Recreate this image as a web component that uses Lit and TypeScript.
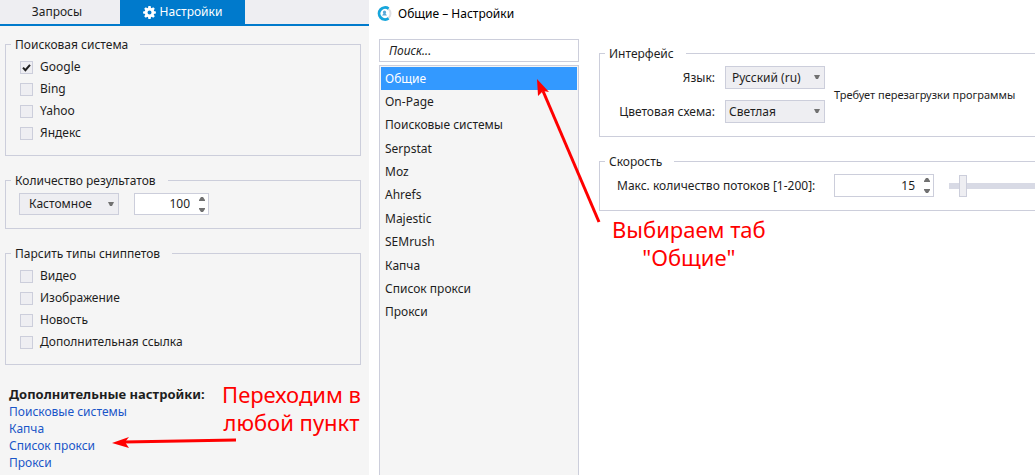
import { LitElement, html, css, svg } from "lit";
import { customElement, property, state } from "lit/decorators.js";
import { classMap } from "lit/directives/class-map.js";

const controls = css`
  * { box-sizing: border-box; }
  fieldset {
    margin: 0;
    padding: 0;
    border: 1px solid #cccedb;
    min-width: 0;
  }
  legend {
    margin-left: 5px;
    padding: 0 12px 0 4px;
    line-height: 17px;
  }
  button, input, select {
    font: inherit;
    color: inherit;
    margin: 0;
  }
`;

@customElement("check-row")
class CheckRow extends LitElement {
  @property() label = "";
  @property({ type: Boolean }) checked = false;

  static styles = css`
    :host { display: block; }
    label { display: flex; align-items: center; gap: 7px; height: 22px; }
    .box { position: relative; display: flex; width: 13px; height: 13px; }
    input {
      appearance: none;
      box-sizing: border-box;
      width: 13px;
      height: 13px;
      margin: 0;
      border: 1px solid #cccedb;
      background: #eeeef2;
    }
    svg { position: absolute; inset: 0; pointer-events: none; display: none; }
    input:checked + svg { display: block; }
  `;

  render() {
    return html`<label>
      <span class="box">
        <input type="checkbox" .checked=${this.checked} />
        <svg width="13" height="13" viewBox="0 0 13 13">
          <path d="M3 6.6 5.4 9.2 10 3.8" fill="none" stroke="#1e1e1e" stroke-width="2" />
        </svg>
      </span>
      <span>${this.label}</span>
    </label>`;
  }
}

@customElement("drop-down")
class DropDown extends LitElement {
  @property() label = "";
  @property({ type: Array }) options: string[] = [];

  static styles = [controls, css`
    :host { display: block; position: relative; width: 100px; }
    select {
      appearance: none;
      display: block;
      width: 100%;
      height: var(--control-height, 23px);
      padding: 0 14px 0 var(--select-indent, 6px);
      border: 1px solid #cccedb;
      border-radius: 0;
      background: #eeeef2;
    }
    .arrow { position: absolute; right: 5px; top: 9px; pointer-events: none; }
  `];

  render() {
    return html`<select aria-label=${this.label}>
        ${this.options.map((o) => html`<option>${o}</option>`)}
      </select>
      <svg class="arrow" width="6" height="4" viewBox="0 0 6 4"><path d="M0 0H6L4 4H2Z" fill="#717171" /></svg>`;
  }
}

@customElement("number-box")
class NumberBox extends LitElement {
  @property() label = "";
  @property({ type: Number }) value = 0;

  static styles = [controls, css`
    :host { display: block; }
    .frame {
      display: flex;
      height: var(--control-height, 23px);
      border: 1px solid #cccedb;
      background: #fff;
    }
    input {
      appearance: textfield;
      flex: 1;
      min-width: 0;
      padding: 0;
      border: 0;
      background: none;
      text-align: right;
    }
    input::-webkit-inner-spin-button { appearance: none; }
    .steps { display: flex; flex-direction: column; justify-content: center; gap: 7px; padding: 0 3px 0 9px; }
    button { display: flex; padding: 0; border: 0; background: none; }
  `];

  render() {
    return html`<div class="frame">
      <input type="number" aria-label=${this.label} .value=${String(this.value)} />
      <div class="steps">
        <button aria-label="+" @click=${() => this.value++}>
          <svg width="6" height="4" viewBox="0 0 6 4"><path d="M0 4V3L2 0H4L6 3V4Z" fill="#717171" /></svg>
        </button>
        <button aria-label="−" @click=${() => this.value--}>
          <svg width="6" height="4" viewBox="0 0 6 4"><path d="M0 0V1L2 4H4L6 1V0Z" fill="#717171" /></svg>
        </button>
      </div>
    </div>`;
  }
}

const gearTeeth = [0, 45, 90, 135, 180, 225, 270, 315];

@customElement("app-root")
class AppRoot extends LitElement {
  @state() section = "Общие";

  sections = ["Общие", "On-Page", "Поисковые системы", "Serpstat", "Moz", "Ahrefs",
    "Majestic", "SEMrush", "Капча", "Список прокси", "Прокси"];

  static styles = [controls, css`
    :host {
      display: grid;
      grid-template-columns: 369px minmax(0, 1fr);
      position: relative;
      height: 100vh;
      overflow: hidden;
      background: #fff;
      color: #1e1e1e;
      font: 12px/18px "Noto Sans", "Open Sans", sans-serif;
    }
    .task { background: #f5f5f5; min-height: 0; overflow: hidden; }
    .tabs { display: flex; height: 26px; background: #eeeef2; border-bottom: 2px solid #007acc; }
    .tab {
      display: flex;
      align-items: center;
      justify-content: center;
      gap: 4px;
      width: 120px;
      padding: 0 6px 0 0;
      border: 0;
      background: none;
    }
    .tab.active { width: 125px; padding: 0; background: #007acc; color: #fff; }
    .groups { display: flex; flex-direction: column; gap: 16px; padding: 10px 8px 0 5px; }
    .checks { padding: 3px 14px 11px; }
    .amount { display: flex; gap: 15px; padding: 4px 13px 13px; --control-height: 22px; --select-indent: 9px; }
    .amount number-box { width: 75px; }
    .more { display: flex; flex-direction: column; align-items: flex-start; padding: 20px 9px 0; line-height: 17px; }
    .more h2 { margin: 0; font-size: 13px; line-height: 18px; }
    .more a { color: #1a55c8; text-decoration: none; }

    .window { display: flex; flex-direction: column; min-height: 0; }
    .title {
      display: flex;
      align-items: center;
      gap: 6px;
      height: 27px;
      padding-left: 8px;
      color: #000;
      font-size: 12px;
    }
    .columns { display: flex; flex: 1; gap: 20px; padding: 12px 0 0 10px; min-height: 0; }
    .side { display: flex; flex-direction: column; gap: 3px; width: 200px; flex: none; }
    .search {
      height: 23px;
      padding: 0 9px;
      border: 1px solid #cccedb;
      background: #fff;
      font-style: italic;
    }
    .search::placeholder { color: #1e1e1e; opacity: 1; }
    .list { flex: 1; padding: 1px; border: 1px solid #cccedb; border-bottom: 0; background: #f5f5f5; }
    .list ul { display: grid; grid-auto-rows: 1fr; height: 257px; margin: 0; padding: 0; list-style: none; }
    .list li { display: grid; }
    .list button { padding: 0 4px; border: 0; background: none; text-align: left; }
    .list button.chosen { background: #3399ff; color: #fff; }

    .content { display: flex; flex-direction: column; gap: 16px; flex: 1; min-width: 0; padding-top: 6px; }
    .content fieldset { border-right: 0; }
    .look { display: flex; align-items: center; gap: 9px; padding: 4px 0 13px 17px; }
    .pairs { display: grid; grid-template-columns: 98px 100px; gap: 11px 10px; align-items: center; }
    .pairs label { text-align: right; white-space: nowrap; }
    .pairs .theme { --select-indent: 3px; }
    .note { white-space: nowrap; font-size: 11px; }
    .speed { display: flex; align-items: center; padding: 4px 0 13px 17px; overflow: hidden; }
    .speed label { width: 217px; flex: none; white-space: nowrap; }
    .speed number-box { width: 100px; flex: none; }
    .slider { appearance: none; flex: none; width: 150px; height: 22px; margin-left: 15px; background: none; }
    .slider::-webkit-slider-runnable-track { height: 6px; background: #d8dae5; }
    .slider::-webkit-slider-thumb {
      appearance: none;
      box-sizing: border-box;
      width: 8px;
      height: 22px;
      margin-top: -8px;
      border: 1px solid #cccedb;
      background: #eeeef2;
    }

    .arrows { position: absolute; left: 0; top: 0; pointer-events: none; }
    .callout {
      position: absolute;
      margin: 0;
      color: #f00;
      font-size: 22px;
      line-height: 28px;
      text-align: center;
      white-space: nowrap;
    }
    .callout.links { left: 222px; top: 380px; }
    .callout.tab-hint { left: 612px; top: 215px; }
  `];

  render() {
    return html`
      <section class="task">
        <div class="tabs">
          <button class="tab">Запросы</button>
          <button class="tab active">
            <svg width="13" height="13" viewBox="-6.5 -6.5 13 13">
              ${gearTeeth.map((a) => svg`<path d="M-1.6-4 -1.1-6.4H1.1L1.6-4Z" fill="#fff" transform="rotate(${a})" />`)}
              <circle r="3.4" fill="none" stroke="#fff" stroke-width="2.8" />
            </svg>
            Настройки
          </button>
        </div>
        <div class="groups">
          <fieldset>
            <legend>Поисковая система</legend>
            <div class="checks">
              <check-row label="Google" checked></check-row>
              <check-row label="Bing"></check-row>
              <check-row label="Yahoo"></check-row>
              <check-row label="Яндекс"></check-row>
            </div>
          </fieldset>
          <fieldset>
            <legend>Количество результатов</legend>
            <div class="amount">
              <drop-down label="Количество результатов" .options=${["Кастомное"]}></drop-down>
              <number-box label="Количество результатов" .value=${100}></number-box>
            </div>
          </fieldset>
          <fieldset>
            <legend>Парсить типы сниппетов</legend>
            <div class="checks">
              <check-row label="Видео"></check-row>
              <check-row label="Изображение"></check-row>
              <check-row label="Новость"></check-row>
              <check-row label="Дополнительная ссылка"></check-row>
            </div>
          </fieldset>
        </div>
        <nav class="more">
          <h2>Дополнительные настройки:</h2>
          ${["Поисковые системы", "Капча", "Список прокси", "Прокси"].map((t) => html`<a href="#">${t}</a>`)}
        </nav>
      </section>

      <section class="window">
        <div class="title">
          <svg width="15" height="16" viewBox="0 0 15 16">
            <circle cx="7.5" cy="7.5" r="6" fill="none" stroke="#dcdfe4" stroke-width="2" />
            <path d="M11.6 2.6A6 6 0 1 0 11.6 12.4" fill="none" stroke="#16a6dc" stroke-width="2.8" />
            <path d="M5 9.6H10L8.6 7.4A1.6 1.6 0 1 0 6.4 7.4Z" fill="#5aa9d8" />
          </svg>
          Общие – Настройки
        </div>
        <div class="columns">
          <div class="side">
            <input class="search" type="text" aria-label="Поиск" placeholder="Поиск..." />
            <div class="list">
              <ul>
                ${this.sections.map((s) => html`<li>
                  <button class=${classMap({ chosen: s === this.section })} @click=${() => (this.section = s)}>${s}</button>
                </li>`)}
              </ul>
            </div>
          </div>
          <div class="content">
            <fieldset>
              <legend>Интерфейс</legend>
              <div class="look">
                <div class="pairs">
                  <label>Язык:</label>
                  <drop-down label="Язык" .options=${["Русский (ru)"]}></drop-down>
                  <label>Цветовая схема:</label>
                  <drop-down class="theme" label="Цветовая схема" .options=${["Светлая"]}></drop-down>
                </div>
                <span class="note">Требует перезагрузки программы</span>
              </div>
            </fieldset>
            <fieldset>
              <legend>Скорость</legend>
              <div class="speed">
                <label>Макс. количество потоков [1-200]:</label>
                <number-box label="Макс. количество потоков" .value=${15}></number-box>
                <input class="slider" type="range" min="1" max="200" value="15" aria-label="Макс. количество потоков" />
              </div>
            </fieldset>
          </div>
        </div>
      </section>

      <svg class="arrows" width="1035" height="475" viewBox="0 0 1035 475" fill="#f00" stroke="#f00">
        <path d="M599 222 543 91" stroke-width="3" />
        <path d="M537 79 549 92 543 91 538 96Z" stroke="none" />
        <path d="M236 440 124 442" stroke-width="3" />
        <path d="M112 443 129 437 125 442 129 448Z" stroke="none" />
      </svg>
      <p class="callout links">Переходим в<br />любой пункт</p>
      <p class="callout tab-hint">Выбираем таб<br />"Общие"</p>
    `;
  }
}
